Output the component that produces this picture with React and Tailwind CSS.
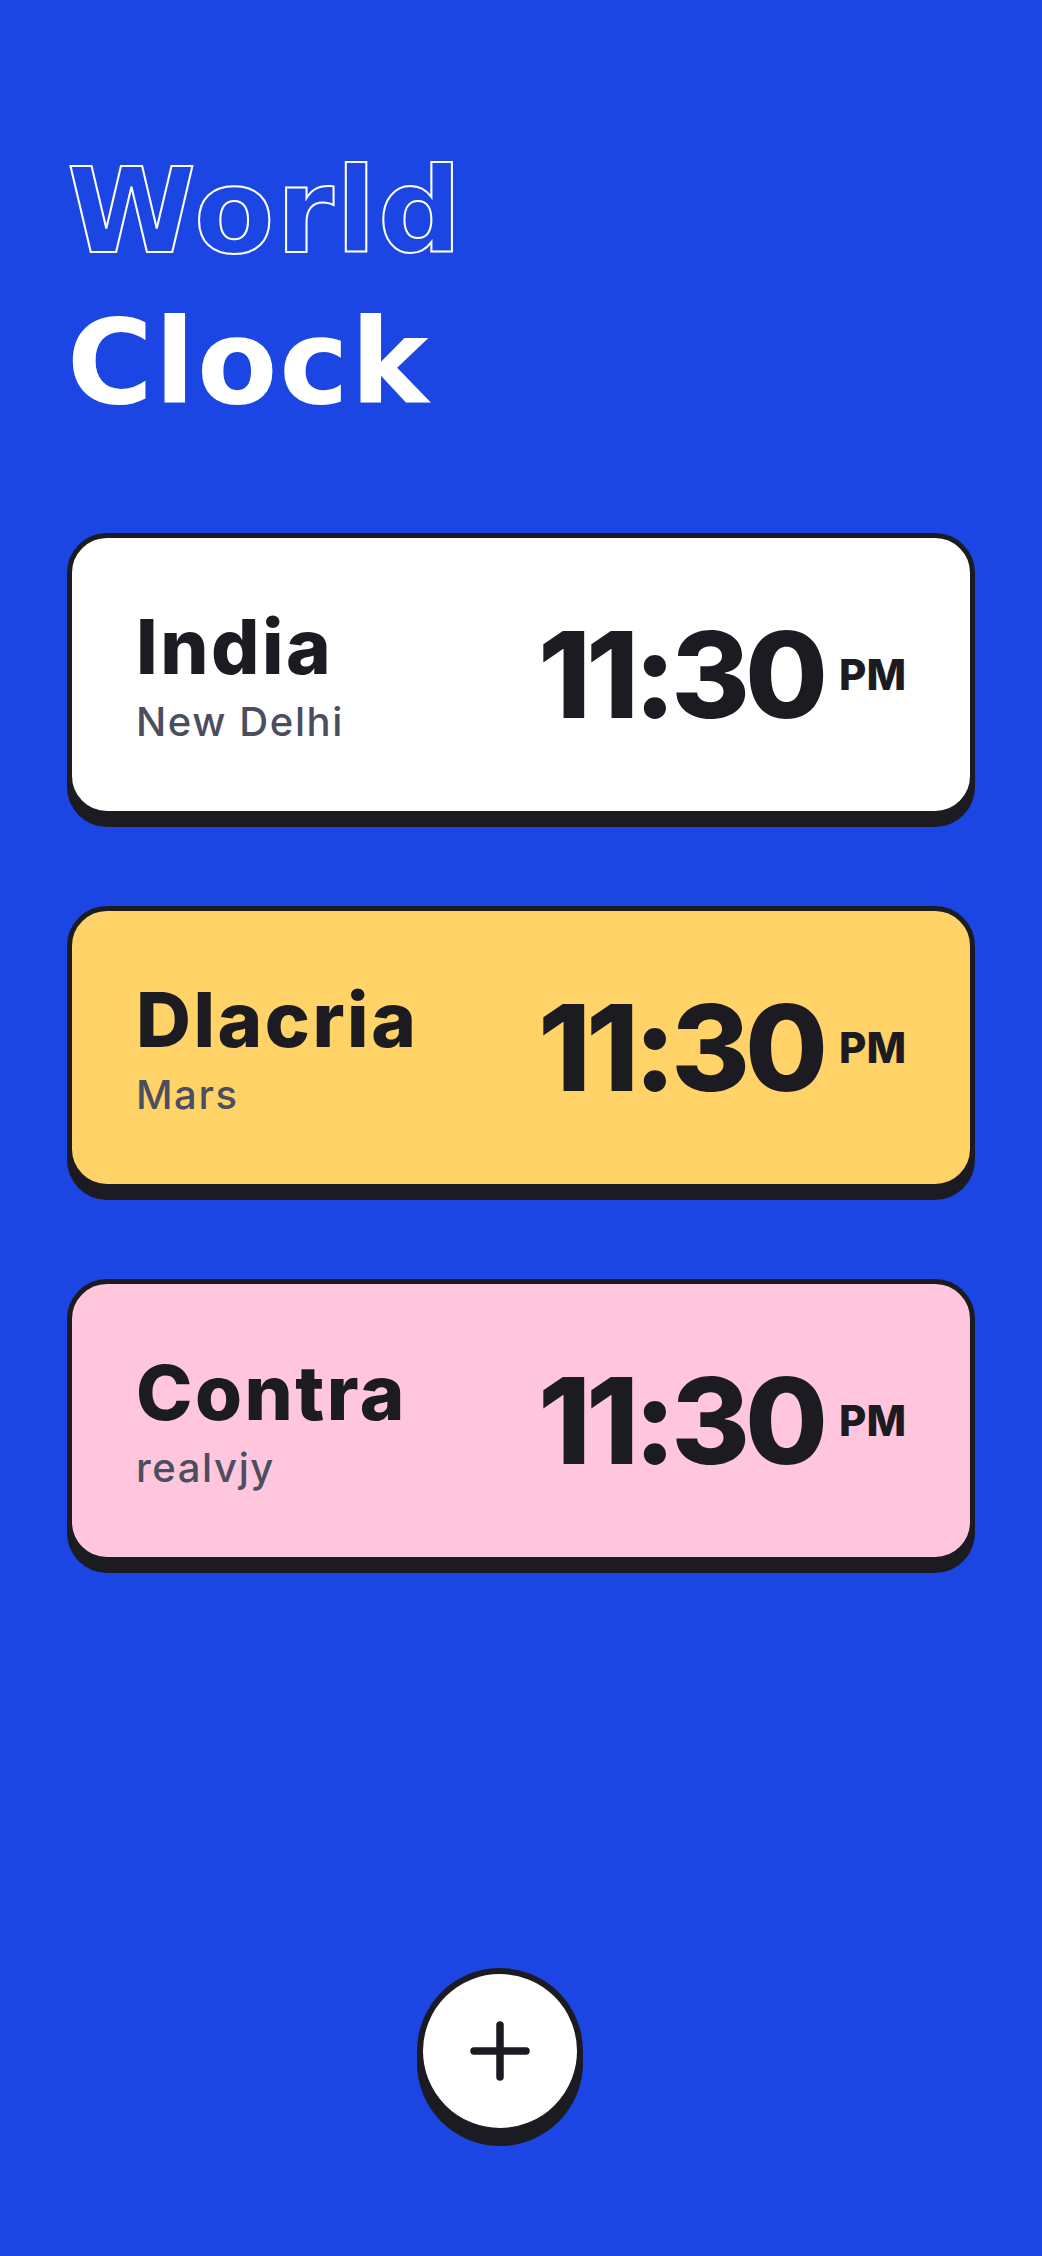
import React from "react";

const cards = [
  { name: "India", sub: "New Delhi", bg: "bg-white" },
  { name: "Dlacria", sub: "Mars", bg: "bg-[#ffd368]" },
  { name: "Contra", sub: "realvjy", bg: "bg-[#ffc6de]" },
];

function Card({ name, sub, bg }) {
  return (
    <div
      className={`${bg} box-border h-[283px] rounded-[40px] border-[5px] border-[#1c1b22] shadow-[0_11px_0_#1c1b22] flex items-center justify-between px-[64px]`}
    >
      <div className="flex flex-col">
        <div className="font-['Inter',sans-serif] font-extrabold text-[76px] leading-none tracking-[2.5px] text-[#1c1b22]">
          {name}
        </div>
        <div className="mt-[18px] font-['Inter',sans-serif] font-medium text-[40px] leading-none tracking-[1.6px] text-[#4b4e5f]">
          {sub}
        </div>
      </div>
      <div className="flex items-center gap-[16px]">
        <div className="font-['Inter',sans-serif] font-extrabold text-[120px] leading-none tracking-[-5px] text-[#1c1b22]">
          11:30
        </div>
        <div className="font-['Inter',sans-serif] font-extrabold text-[42px] leading-none text-[#1c1b22]">
          PM
        </div>
      </div>
    </div>
  );
}

export default function App() {
  return (
    <div className="min-h-[2256px] w-full bg-[#1b46e3] px-[67px] flex flex-col">
      <div className="pt-[136px] font-['DejaVu_Sans',sans-serif] font-bold text-[117px] leading-[151px] tracking-[2px]">
        <div className="text-transparent [-webkit-text-stroke:2px_white]">World</div>
        <div className="text-white">Clock</div>
      </div>
      <div className="mt-[95px] flex flex-col gap-[90px]">
        {cards.map((c) => (
          <Card key={c.name} {...c} />
        ))}
      </div>
      <div className="mt-[406px] flex justify-center pr-[42px]">
        <button className="box-border w-[166px] h-[166px] rounded-full bg-white border-[6px] border-[#1c1b22] shadow-[0_12px_0_#1c1b22] flex items-center justify-center">
          <svg width="60" height="60" viewBox="0 0 60 60" fill="none">
            <path
              d="M30 4 V56 M4 30 H56"
              stroke="#1c1b22"
              strokeWidth="7.5"
              strokeLinecap="round"
            />
          </svg>
        </button>
      </div>
    </div>
  );
}
